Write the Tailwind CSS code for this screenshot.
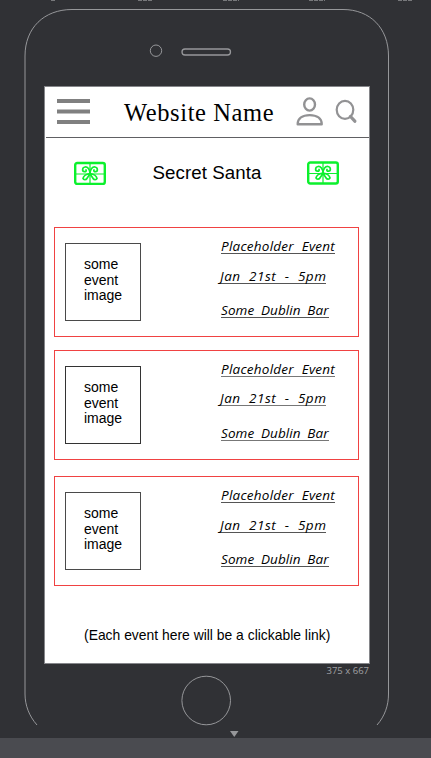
<!DOCTYPE html>
<html lang="en">
<head>
<meta charset="utf-8">
<title>Secret Santa</title>
<script src="https://cdn.jsdelivr.net/npm/@tailwindcss/browser@4"></script>
</head>
<body class="w-[431px] h-[758px] overflow-hidden bg-[#303135] font-['Liberation_Sans',sans-serif] text-black flex flex-col">
<div class="relative h-[738px] shrink-0 overflow-hidden pt-[86px] pl-[44px]">
  <svg class="absolute left-0 top-0" width="431" height="738" fill="none" stroke="#96979a">
    <path d="M37 725C29 716 25 705 25 694V56C25 28 44 9.500 72 9.500H343C370 9.500 388.500 28 388.500 56V694C388.500 705 385 716 377 725"/>
    <circle cx="156" cy="50.700" r="5.700"/>
    <rect x="182" y="49" width="48.500" height="6" rx="3" stroke-width="1.300"/>
    <circle cx="206.200" cy="700.500" r="24.300"/>
    <path d="M230 731h8.500l-4.250 6z" fill="#96979a" stroke="none"/>
    <path d="M51 .5h4M138 .5h14M223 .5h16M309 .5h16M398 .5h15" stroke="#77787b" stroke-dasharray="4 1"/>
  </svg>
  <main class="relative w-[326px] h-[578px] bg-white border border-[#85868a]">
    <header class="ml-px h-[51px] border-b border-[#606063] flex items-start">
      <svg class="ml-[11px] mt-3 w-[33px] h-[26px] shrink-0" viewBox="0 0 33 26" fill="#808080"><path d="M0 0h33v4H0zM0 10.500h33v4H0zM0 21h33v4H0z"/></svg>
      <h1 class="ml-[34px] mt-[11px] w-[172px] leading-[30px] text-[24.500px] tracking-[0.6px] whitespace-nowrap font-['Liberation_Serif',serif]">Website Name</h1>
      <svg class="mt-2.5 w-[28px] h-[30px] shrink-0" viewBox="0 0 28 30" fill="none" stroke="#929294" stroke-width="2.400"><ellipse cx="13.600" cy="7.500" rx="5.400" ry="6.100"/><path d="M1.700 27.200C1.700 21.500 6.500 18.100 13.700 18.100S25.700 21.500 25.700 27.200Z" stroke-linejoin="round"/></svg>
      <svg class="ml-[11px] mt-3 w-[22px] h-[25px] shrink-0" viewBox="0 0 22 25" fill="none" stroke="#929294"><ellipse cx="10" cy="10.800" rx="8.300" ry="9" stroke-width="2.200"/><path d="M15.500 17.500l4.300 4.700" stroke-width="3.200" stroke-linecap="round"/></svg>
    </header>
    <section class="h-[89px] pt-[23px] px-[29px] flex items-start justify-between">
      <svg class="w-[32px] h-[24px]" viewBox="0 0 32 24" fill="none" stroke="#0cf02d">
        <g id="gift"><rect x="1.200" y="2" width="29.600" height="21" rx="2" stroke-width="2.400"/><path stroke-width="1.200" d="M16 2v21M2 13h28"/><path stroke-width="1.700" stroke-linecap="round" d="M16 13C16 8 13.500 5.700 11 6C8 6.500 7.900 10.500 10.500 10.700C12 10.800 12.500 9.800 12 9M16 13C16 8 18.500 5.700 21 6C24 6.500 24.100 10.500 21.500 10.700C20 10.800 19.500 9.800 20 9M16 12.500C13 13 9.500 14.500 9 17.500C9.500 19 12 19 13 17.500M16 12.500C19 13 22.500 14.500 23 17.500C22.500 19 20 19 19 17.500M16 13L12.500 18M16 13L19.500 18"/></g>
      </svg>
      <h2 class="pl-px pt-px text-[18.700px] leading-[22px] tracking-[0.08px]">Secret Santa</h2>
      <svg class="w-[32px] h-[24px] mr-px" viewBox="0 0.5 32 24" fill="none" stroke="#0cf02d"><use href="#gift"/></svg>
    </section>
    <section class="pl-[9px] flex flex-col">
      <article class="w-[305px] h-[110px] border border-[#f04242] flex">
        <div class="ml-[10px] mt-[15px] w-[76px] h-[78px] border border-[#4a4a4a] pt-[13px] pl-[18px] text-[14px] leading-[15.500px]">some<br>event<br>image</div>
        <div class="ml-[78px] pt-[9px] font-['Open_Sans',sans-serif] italic text-[13.500px] leading-[19px] whitespace-nowrap">
          <p class="ml-[2px] w-[114px] h-[17px] border-b border-[#555] tracking-[0.25px] [word-spacing:4px]">Placeholder Event</p>
          <p class="mt-[13px] pl-px w-[107px] h-[17px] border-b border-[#555] tracking-[0.5px] [word-spacing:4.5px]">Jan 21st - 5pm</p>
          <p class="ml-[2px] mt-[17px] w-[108px] h-[17px] border-b border-[#555] tracking-[0.1px] [word-spacing:3px]">Some Dublin Bar</p>
        </div>
      </article>
      <article class="mt-[13px] w-[305px] h-[110px] border border-[#f04242] flex">
        <div class="ml-[10px] mt-[15px] w-[76px] h-[78px] border border-[#333] pt-[13px] pl-[18px] text-[14px] leading-[15.500px]">some<br>event<br>image</div>
        <div class="ml-[78px] pt-[9px] font-['Open_Sans',sans-serif] italic text-[13.500px] leading-[19px] whitespace-nowrap">
          <p class="ml-[2px] w-[114px] h-[17px] border-b border-[#777] tracking-[0.25px] [word-spacing:4px]">Placeholder Event</p>
          <p class="mt-[12px] pl-px w-[107px] h-[17px] border-b border-[#777] tracking-[0.5px] [word-spacing:4.5px]">Jan 21st - 5pm</p>
          <p class="ml-[2px] mt-[18px] w-[108px] h-[17px] border-b border-[#777] tracking-[0.1px] [word-spacing:3px]">Some Dublin Bar</p>
        </div>
      </article>
      <article class="mt-[16px] w-[305px] h-[110px] border border-[#f04242] flex">
        <div class="ml-[10px] mt-[15px] w-[76px] h-[78px] border border-[#4a4a4a] pt-[13px] pl-[18px] text-[14px] leading-[15.500px]">some<br>event<br>image</div>
        <div class="ml-[78px] pt-[9px] font-['Open_Sans',sans-serif] italic text-[13.500px] leading-[19px] whitespace-nowrap">
          <p class="ml-[2px] w-[114px] h-[17px] border-b border-[#555] tracking-[0.25px] [word-spacing:4px]">Placeholder Event</p>
          <p class="mt-[13px] pl-px w-[107px] h-[17px] border-b border-[#555] tracking-[0.5px] [word-spacing:4.5px]">Jan 21st - 5pm</p>
          <p class="ml-[2px] mt-[17px] w-[108px] h-[17px] border-b border-[#555] tracking-[0.1px] [word-spacing:3px]">Some Dublin Bar</p>
        </div>
      </article>
    </section>
    <p class="mt-[41px] ml-[39px] text-[13.900px] leading-[17px] whitespace-nowrap">(Each event here will be a clickable link)</p>
  </main>
  <p class="w-[325px] text-right text-[9.500px] leading-[14px] text-[#a0a1a4] font-['Open_Sans',sans-serif]">375 x 667</p>
</div>
<div class="h-5 bg-[#4a4b50]"></div>
</body>
</html>
